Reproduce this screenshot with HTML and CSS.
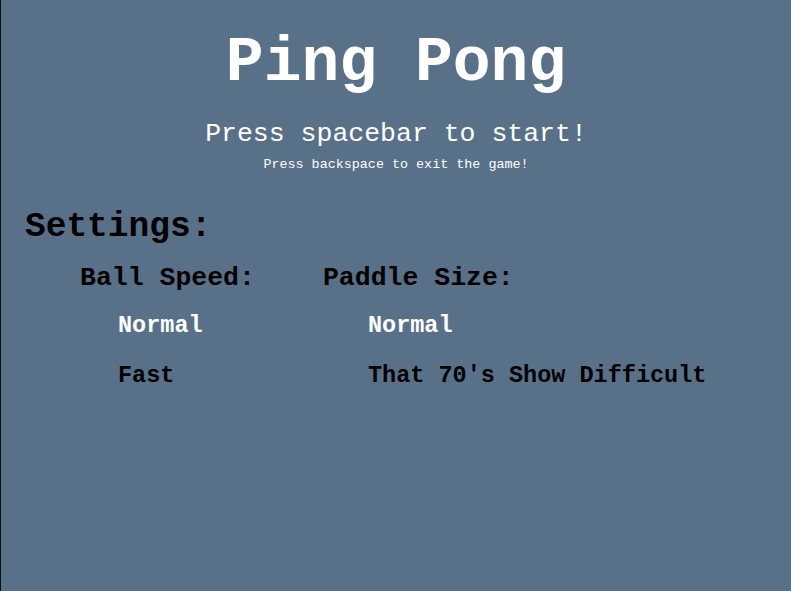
FILE: index.html
```html
<!DOCTYPE html>
<html>
<head>
<meta charset="utf-8">
<link rel="stylesheet" href="styles.css">
</head>
<body>
<div class="screen">
  <header class="intro">
    <h1 class="title">Ping Pong</h1>
    <p class="start">Press spacebar to start!</p>
    <p class="exit">Press backspace to exit the game!</p>
  </header>
  <section class="settings">
    <h2 class="settings-title">Settings:</h2>
    <div class="groups">
      <div class="group group-speed">
        <h3 class="group-title">Ball Speed:</h3>
        <ul class="options">
          <li class="option selected">Normal</li>
          <li class="option">Fast</li>
        </ul>
      </div>
      <div class="group group-paddle">
        <h3 class="group-title">Paddle Size:</h3>
        <ul class="options">
          <li class="option selected">Normal</li>
          <li class="option">That 70's Show Difficult</li>
        </ul>
      </div>
    </div>
  </section>
</div>
</body>
</html>
```

FILE: styles.css
```css
html, body {
  margin: 0;
  padding: 0;
  height: 100%;
}
body {
  background: #587189;
  font-family: "Courier New", "Nimbus Mono PS", "FreeMono", "Liberation Mono", monospace;
  color: #000;
}
.screen {
  box-sizing: border-box;
  height: 591px;
  border-left: 1px solid #111;
  overflow: hidden;
}
.intro {
  text-align: center;
  color: #fff;
  padding-top: 32px;
}
.title {
  margin: 0;
  font-size: 63px;
  line-height: 64px;
  font-weight: bold;
}
.start {
  margin: 25px 0 0;
  font-size: 26.5px;
  line-height: 27px;
  font-weight: normal;
}
.exit {
  margin: 10px 0 0;
  font-size: 13.4px;
  line-height: 14px;
}
.settings {
  padding-left: 24px;
  margin-top: 37px;
}
.settings-title {
  margin: 0;
  font-size: 34.5px;
  line-height: 35px;
  font-weight: bold;
}
.groups {
  display: flex;
  gap: 68px;
  margin-left: 55px;
  margin-top: 21px;
}
.group-title {
  margin: 0;
  font-size: 26.5px;
  line-height: 27px;
  font-weight: bold;
}
.options {
  list-style: none;
  margin: 0;
  padding: 0 0 0 38px;
}
.group-paddle .options {
  padding-left: 45px;
}
.option {
  font-size: 23.5px;
  line-height: 24px;
  font-weight: bold;
  margin-top: 26px;
}
.option.selected {
  color: #fff;
  margin-top: 22px;
}
```
